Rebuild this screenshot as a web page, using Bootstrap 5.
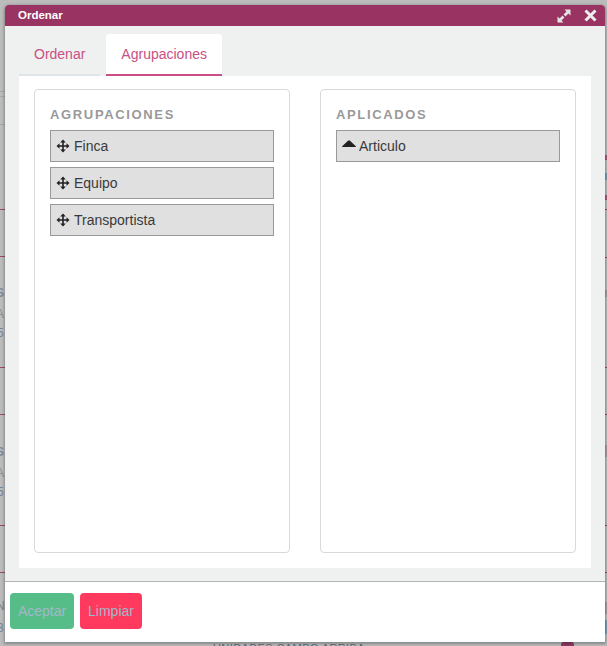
<!DOCTYPE html>
<html lang="es"><head><meta charset="utf-8"><title>Ordenar</title>
<link href="https://cdn.jsdelivr.net/npm/bootstrap@5.3.0/dist/css/bootstrap.min.css" rel="stylesheet">
<style>
html,body{height:100%;overflow:hidden}
body{background:#bcbcbc;font-family:"Liberation Sans",Arial,sans-serif;position:relative}
.bg-tick{position:absolute;height:1px;background:#9a4a6e}
.bg-tick.lf{left:0;width:5px}.bg-tick.rt{left:605px;width:2px}
.bg-tick.pale{background:#a8a8a8}
.bg-blob{position:absolute;left:605px;width:2px}
.bg-txt{position:absolute;font-size:12px;line-height:12px;color:#72869b;white-space:nowrap}
.bg-txt.st{font-weight:700;color:#7d8b99}
.bg-txt.gr{color:#8f8f8f}
.bg-low{position:absolute;left:213px;top:642px;font-size:11px;line-height:12px;letter-spacing:.4px;color:#5d6c7c;white-space:nowrap}
.bg-mark{position:absolute;left:561px;top:642px;width:13px;height:5px;background:#8d3a62;border-radius:3px 3px 0 0}
.dlg{position:absolute;left:5px;top:5px;width:600px;height:637px;background:#eff1f1;box-shadow:0 1px 3px 1px rgba(0,0,0,.28);display:flex;flex-direction:column;border-radius:4px 4px 0 0}
.dlg-title{height:21px;flex:none;background:#993362;color:#fff;font-size:11.5px;font-weight:700;border-radius:4px 4px 0 0;padding:0 8px 0 13px}
.dlg-ctl{gap:13px}
.dlg-main{flex:1;padding:8px 14px 13px;min-height:0;display:flex;flex-direction:column}
.tabs-x{border-bottom:0;gap:6px;height:42px;flex:none}
.tabs-x .nav-link{border:0;border-radius:4px 4px 0 0;color:#c94f84;font-size:14px;height:42px;padding:0 15px;line-height:40px;border-bottom:2px solid #dee6ea;margin:0;background:transparent}
.tabs-x .nav-link.active{color:#c94f84;background:#fff;border-bottom:2px solid #c94f84}
.pane-x{flex:1;background:#fff;padding:13px 15px 15px;gap:30px;min-height:0}
.box-x{flex:1;border:1px solid #d9d9d9;border-radius:4px;padding:15px;min-width:0}
.box-x h6{font-size:13px;font-weight:700;letter-spacing:1.65px;color:#999;margin:2px 0 8px;line-height:15px}
.item-x{height:32px;background:#e0e0e0;border:1px solid #999;color:#3a3a3a;font-size:14px;padding:0 5px;margin-bottom:5px;gap:4px}
.item-x.tight{gap:3px}
.dlg-foot{height:61px;flex:none;background:#fff;border-top:1px solid #b4b4b4;padding:11px 5px;gap:6px}
.btn-x{height:36px;font-size:14px;padding:0 7px;border:0;border-radius:4px;color:#a3b7c9}
.btn-a{background:#57bd88;width:64px}
.btn-l{background:#ff3a5e;width:62px}
.btn-x:disabled{opacity:1;color:#a3b7c9}
.btn-a:disabled{background:#57bd88}.btn-l:disabled{background:#ff3a5e}
</style></head><body>
<div class="bg-tick lf pale" style="top:91px"></div><div class="bg-tick lf pale" style="top:96px"></div><div class="bg-tick lf pale" style="top:124px"></div>
<div class="bg-tick lf" style="top:209px"></div><div class="bg-tick lf" style="top:256px"></div><div class="bg-tick lf" style="top:367px"></div><div class="bg-tick lf" style="top:414px"></div><div class="bg-tick lf" style="top:525px"></div><div class="bg-tick lf" style="top:572px"></div>
<div class="bg-tick rt" style="top:209px"></div><div class="bg-tick rt" style="top:257px"></div><div class="bg-tick rt" style="top:367px"></div><div class="bg-tick rt" style="top:414px"></div><div class="bg-tick rt" style="top:525px"></div><div class="bg-tick rt" style="top:572px"></div>
<div class="bg-blob" style="top:155px;height:5px;background:#a85a80"></div><div class="bg-blob" style="top:173px;height:7px;background:#7f9db5"></div><div class="bg-blob" style="top:195px;height:5px;background:#a85a80"></div><div class="bg-blob" style="top:290px;height:7px;background:#b09aa6"></div><div class="bg-blob" style="top:445px;height:12px;background:#b09aa6"></div><div class="bg-blob" style="top:602px;height:12px;background:#b09aa6"></div><div class="bg-blob" style="top:620px;height:14px;background:#7f9db5"></div>
<span class="bg-txt st" style="left:-4px;top:287px">S</span><span class="bg-txt gr" style="left:-4px;top:308px">A</span><span class="bg-txt" style="left:-3px;top:327px">5</span>
<span class="bg-txt st" style="left:-4px;top:446px">S</span><span class="bg-txt gr" style="left:-4px;top:467px">A</span><span class="bg-txt" style="left:-3px;top:486px">5</span>
<span class="bg-txt" style="left:-4px;top:600px">N</span><span class="bg-txt" style="left:-3px;top:622px">3</span>
<span class="bg-low">UNIDADES CAMPO ARRIBA</span><span class="bg-mark"></span>
<div class="dlg">
 <div class="dlg-title d-flex align-items-center justify-content-between">
  <span>Ordenar</span>
  <span class="dlg-ctl d-flex align-items-center">
   <svg width="14" height="14" viewBox="0 0 14 14" fill="#e4e4e4"><path d="M7.500 .5H13.500V6.500L11.400 4.500 8.500 7.400 6.600 5.500 9.500 2.600zM6.500 13.500H.5V7.500L2.600 9.500 5.500 6.600 7.400 8.500 4.500 11.400z"/></svg>
   <svg width="13" height="13" viewBox="0 0 13 13" stroke="#eee" stroke-width="3" fill="none"><path d="M1.500 1.500l10 10M11.500 1.500l-10 10"/></svg>
  </span>
 </div>
 <div class="dlg-main">
  <ul class="nav nav-tabs tabs-x">
   <li class="nav-item"><a class="nav-link" href="#">Ordenar</a></li>
   <li class="nav-item"><a class="nav-link active" href="#">Agrupaciones</a></li>
  </ul>
  <div class="pane-x d-flex">
   <div class="box-x">
    <h6>AGRUPACIONES</h6>
    <div class="item-x d-flex align-items-center"><svg width="14" height="14" viewBox="0 0 14 14" fill="#222"><path d="M7 .5L9.800 3.500H7.800V6.200H10.500V4.200L13.500 7 10.500 9.800V7.800H7.800V10.500H9.800L7 13.500 4.200 10.500H6.200V7.800H3.500V9.800L.5 7 3.500 4.200V6.200H6.200V3.500H4.200z"/></svg><span>Finca</span></div>
    <div class="item-x d-flex align-items-center"><svg width="14" height="14" viewBox="0 0 14 14" fill="#222"><path d="M7 .5L9.800 3.500H7.800V6.200H10.500V4.200L13.500 7 10.500 9.800V7.800H7.800V10.500H9.800L7 13.500 4.200 10.500H6.200V7.800H3.500V9.800L.5 7 3.500 4.200V6.200H6.200V3.500H4.200z"/></svg><span>Equipo</span></div>
    <div class="item-x d-flex align-items-center"><svg width="14" height="14" viewBox="0 0 14 14" fill="#222"><path d="M7 .5L9.800 3.500H7.800V6.200H10.500V4.200L13.500 7 10.500 9.800V7.800H7.800V10.500H9.800L7 13.500 4.200 10.500H6.200V7.800H3.500V9.800L.5 7 3.500 4.200V6.200H6.200V3.500H4.200z"/></svg><span>Transportista</span></div>
   </div>
   <div class="box-x">
    <h6>APLICADOS</h6>
    <div class="item-x tight d-flex align-items-center"><svg width="14" height="14" viewBox="0 0 14 14" fill="#222"><path d="M0 8Q0 7.300 1 6.500L6 1.700Q7 .9 8 1.700L13 6.500Q14 7.300 14 8z"/></svg><span>Articulo</span></div>
   </div>
  </div>
 </div>
 <div class="dlg-foot d-flex align-items-start">
  <button class="btn btn-x btn-a" disabled>Aceptar</button>
  <button class="btn btn-x btn-l" disabled>Limpiar</button>
 </div>
</div>
<script src="https://cdn.jsdelivr.net/npm/bootstrap@5.3.0/dist/js/bootstrap.bundle.min.js"></script>
</body></html>
